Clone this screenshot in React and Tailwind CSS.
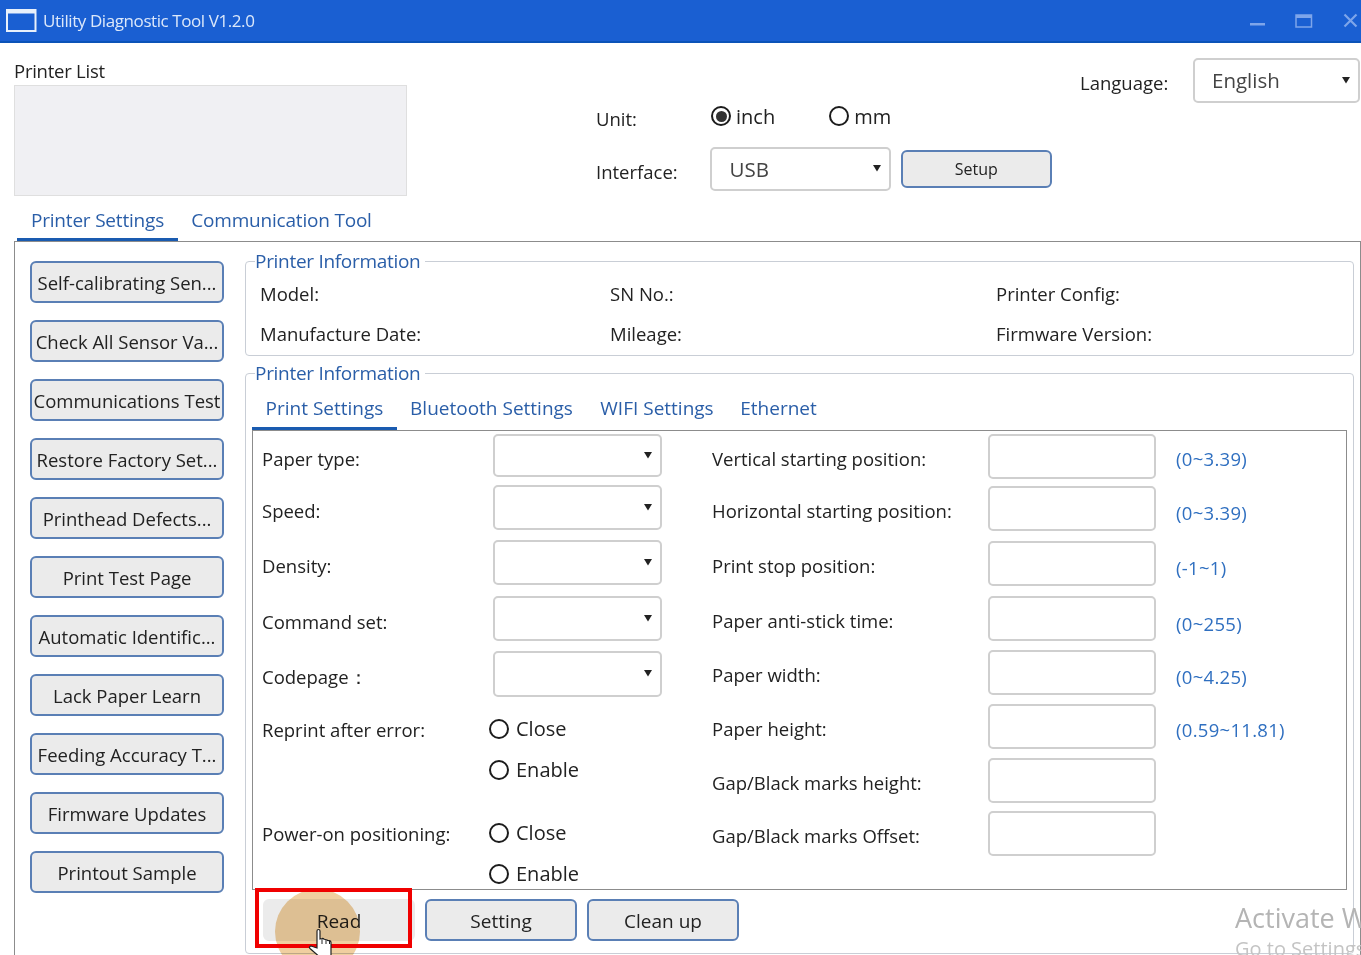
import React from 'react';

const sideButtons = [
  'Self-calibrating Sen...',
  'Check All Sensor Va...',
  'Communications Test',
  'Restore Factory Set...',
  'Printhead Defects...',
  'Print Test Page',
  'Automatic Identific...',
  'Lack Paper Learn',
  'Feeding Accuracy T...',
  'Firmware Updates',
  'Printout Sample',
];

const rightRows = [
  { label: 'Vertical starting position:', hint: '(0~3.39)', cls: 'mt-[3px]', hintCls: 'pt-[5px]' },
  { label: 'Horizontal starting position:', hint: '(0~3.39)', cls: 'mt-[7px]', hintCls: 'pt-[9px]' },
  { label: 'Print stop position:', hint: '(-1~1)', cls: 'mt-[10px]', hintCls: 'pt-[9px]' },
  { label: 'Paper anti-stick time:', hint: '(0~255)', cls: 'mt-[10px]', hintCls: 'pt-[11px]' },
  { label: 'Paper width:', hint: '(0~4.25)', cls: 'mt-[9px]', hintCls: 'pt-[9px]' },
  { label: 'Paper height:', hint: '(0.59~11.81)', cls: 'mt-[9px]', hintCls: 'pt-[7px]' },
  { label: 'Gap/Black marks height:', cls: 'mt-[9px]' },
  { label: 'Gap/Black marks Offset:', cls: 'mt-[8px]' },
];

const selectRows = [
  { label: 'Paper type:', cls: 'mt-[3px] h-[43px]' },
  { label: 'Speed:', cls: 'mt-[8px] h-[45px]' },
  { label: 'Density:', cls: 'mt-[10px] h-[45px]' },
  { label: 'Command set:', cls: 'mt-[11px] h-[45px]' },
  { label: 'Codepage：', cls: 'mt-[10px] h-[46px]' },
];

const Radio = ({ checked, className = '' }) => (
  <span className={`flex h-[20px] w-[20px] shrink-0 items-center justify-center rounded-full border-[2.5px] border-[#1c1c1c] ${className}`}>
    {checked && <span className="h-[11px] w-[11px] rounded-full bg-[#333]" />}
  </span>
);

const Select = ({ value, className = '' }) => (
  <div className={`relative flex items-center rounded-[5px] border-2 border-[#cfcfcf] bg-white pl-[17px] text-[20.5px] text-[#444] ${className}`}>
    {value}
    <svg className="absolute right-[8px] top-1/2 -mt-[5px]" width="8" height="8" viewBox="0 0 8 8">
      <path d="M0 1h8L4 7.5z" fill="#222" />
    </svg>
  </div>
);

const Button = ({ children, className = '' }) => (
  <button type="button" className={`flex items-center justify-center whitespace-nowrap rounded-[6px] border-2 border-[#5a7fb5] bg-[#ebebeb] text-[#222] ${className}`}>
    {children}
  </button>
);

const TabRow = ({ tabs, className = '' }) => (
  <div className={`flex ${className}`}>
    {tabs.map((t, i) => (
      <div
        key={t.label}
        className={`flex items-center justify-center border-b-[3px] ${t.w} ${i === 0 ? 'border-[#1a5bb0]' : 'border-transparent'}`}
      >
        {t.label}
      </div>
    ))}
  </div>
);

const App = () => {
  return (
    <div className="relative h-[955px] w-[1361px] overflow-hidden bg-white text-[18.5px] text-[#222] [font-family:'Open_Sans','Noto_Sans',sans-serif]">
      {/* title bar */}
      <div className="flex h-[43px] items-center border-b-2 border-[#0b53b8] bg-[#1a5fd2] text-white">
        <svg className="ml-[6px]" width="31" height="24" viewBox="0 0 31 24">
          <rect x="1" y="1" width="28.5" height="21" fill="none" stroke="#e8f0fb" strokeWidth="2" />
          <rect x="1" y="1" width="28.5" height="3.5" fill="#e8f0fb" />
        </svg>
        <span className="ml-[6px] text-[17px] tracking-[-0.42px] text-[#dce8fa]">Utility Diagnostic Tool V1.2.0</span>
        <div className="ml-auto flex items-center text-[#7ea5ea]">
          <svg width="16" height="16" viewBox="0 0 16 16"><rect x="0" y="10" width="15" height="2.5" fill="currentColor" /></svg>
          <svg className="ml-[29px]" width="18" height="16" viewBox="0 0 18 16">
            <rect x="1" y="2" width="15.5" height="12" fill="none" stroke="currentColor" strokeWidth="1.5" />
            <rect x="1" y="2" width="15.5" height="3" fill="currentColor" />
          </svg>
          <svg className="ml-[30px] mr-[2px]" width="16" height="16" viewBox="0 0 16 16">
            <path d="M1.5 1.5l12 12M13.5 1.5l-12 12" stroke="currentColor" strokeWidth="2.2" />
          </svg>
        </div>
      </div>

      {/* top area */}
      <div className="flex h-[165px]">
        <div className="ml-[14px] w-[393px]">
          <div className="mt-[15px] leading-[26px] tracking-[-0.25px]">Printer List</div>
          <div className="mt-[1px] h-[111px] border border-[#dfdfdf] bg-[#f0f0f3]" />
        </div>
        <div className="ml-[189px] w-[456px]">
          <div className="mt-[55px] flex h-[36px] items-center">
            <span className="w-[115px] pt-[5px]">Unit:</span>
            <Radio checked />
            <span className="ml-[5px] pt-[1px] text-[20px]">inch</span>
            <Radio className="ml-[54px]" />
            <span className="ml-[5px] pt-[1px] text-[20px]">mm</span>
          </div>
          <div className="mt-[13px] flex h-[44px] items-center">
            <span className="w-[115px] pt-[5px]">Interface:</span>
            <Select value="USB" className="h-[44px] w-[181px]" />
            <Button className="ml-[10px] h-[38px] w-[152px] text-[16px]">Setup</Button>
          </div>
        </div>
        <div className="mt-[15px] flex h-[45px] items-center">
          <span className="ml-[28px] w-[113px] pt-[4px]">Language:</span>
          <Select value="English" className="h-[45px] w-[167px]" />
        </div>
      </div>

      {/* main tabs */}
      <TabRow
        className="ml-[17px] h-[33px] pb-0 text-[19px] tracking-[-0.2px] text-[#2a5ea8] [&>div]:pb-[6px]"
        tabs={[
          { label: 'Printer Settings', w: 'w-[161px]' },
          { label: 'Communication Tool', w: 'w-[207px]' },
        ]}
      />

      {/* main panel */}
      <div className="ml-[14px] flex h-[720px] border border-b-0 border-[#8c8c8c]">
        <div className="ml-[15px] flex w-[194px] shrink-0 flex-col gap-[17px] pt-[19px]">
          {sideButtons.map((b) => (
            <Button key={b} className="h-[42px] pt-[2px] text-[18.5px]">{b}</Button>
          ))}
        </div>

        <div className="ml-[21px] w-[1109px]">
          <fieldset className="mt-[6px] h-[108px] rounded-[4px] border border-[#c9ced6] px-[10px]">
            <legend className="-ml-[1px] pr-[5px] text-[19px] leading-[26px] tracking-[-0.3px] text-[#2a5ea8]">Printer Information</legend>
            <div className="grid grid-cols-[350px_386px_1fr] pl-[4px] pt-[6px]">
              <div>Model:</div>
              <div>SN No.:</div>
              <div>Printer Config:</div>
              <div className="mt-[12px]">Manufacture Date:</div>
              <div className="mt-[12px]">Mileage:</div>
              <div className="mt-[12px]">Firmware Version:</div>
            </div>
          </fieldset>

          <fieldset className="mt-[4px] h-[594px] rounded-[4px] border border-[#c9ced6] px-[6px]">
            <legend className="ml-[3px] pr-[5px] text-[19px] leading-[26px] tracking-[-0.3px] text-[#2a5ea8]">Printer Information</legend>
            <TabRow
              className="h-[44px] pt-[4px] text-[19px] text-[#2a5ea8]"
              tabs={[
                { label: 'Print Settings', w: 'w-[145px]' },
                { label: 'Bluetooth Settings', w: 'w-[189px]' },
                { label: 'WIFI Settings', w: 'w-[142px]' },
                { label: 'Ethernet', w: 'w-[101px]' },
              ]}
            />
            <div className="flex h-[460px] border border-[#8c8c8c]">
              {/* left form column */}
              <div className="w-[459px] shrink-0 pl-[9px]">
                {selectRows.map((r) => (
                  <div key={r.label} className={`flex items-center ${r.cls}`}>
                    <span className="w-[231px] pt-[6px]">{r.label}</span>
                    <Select className="h-full w-[169px]" />
                  </div>
                ))}
                <div className="mt-[19px] flex">
                  <span className="w-[227px]">Reprint after error:</span>
                  <div className="flex flex-col gap-[15px]">
                    <div className="flex h-[26px] items-center"><Radio /><span className="ml-[7px] text-[20px]">Close</span></div>
                    <div className="flex h-[26px] items-center"><Radio /><span className="ml-[7px] text-[20px]">Enable</span></div>
                  </div>
                </div>
                <div className="mt-[37px] flex">
                  <span className="w-[227px]">Power-on positioning:</span>
                  <div className="flex flex-col gap-[15px]">
                    <div className="flex h-[26px] items-center"><Radio /><span className="ml-[7px] text-[20px]">Close</span></div>
                    <div className="flex h-[26px] items-center"><Radio /><span className="ml-[7px] text-[20px]">Enable</span></div>
                  </div>
                </div>
              </div>

              {/* right form column */}
              <div className="flex-1">
                {rightRows.map((r) => (
                  <div key={r.label} className={`flex h-[45px] items-center ${r.cls}`}>
                    <span className="w-[276px] pt-[5px]">{r.label}</span>
                    <div className="h-full w-[168px] rounded-[5px] border-2 border-[#cfcfcf] bg-white" />
                    {r.hint && <span className={`ml-[20px] tracking-[0.3px] text-[#2f6fc0] ${r.hintCls}`}>{r.hint}</span>}
                  </div>
                ))}
              </div>
            </div>
            <div className="ml-[11px] mt-[9px] flex gap-[10px] text-[19px]">
              <Button className="h-[42px] w-[152px] border-[#ebebeb] pt-[2px]">Read</Button>
              <Button className="h-[42px] w-[152px] pt-[2px]">Setting</Button>
              <Button className="h-[42px] w-[152px] pt-[2px]">Clean up</Button>
            </div>
          </fieldset>
        </div>
      </div>

      {/* recording overlays */}
      <div className="absolute left-[275px] top-[889px] h-[85px] w-[85px] rounded-full bg-[#f0cfa0] mix-blend-multiply" />
      <div className="absolute left-[255px] top-[888px] h-[60px] w-[157px] border-4 border-[#f00000]" />
      <svg className="absolute left-[308px] top-[928px]" width="30" height="27" viewBox="0 0 30 27">
        <path d="M9 3c0-2 3-2 3 0v8l2-.5c1-.3 2 .3 2 .8l2 .2c1 0 1.500.5 1.500 1l2 .2c1 .2 1.500.8 1.500 1.800v13H10l-8-7c-1-1-.5-2.500 1-2.500l6 2z" fill="#fff" stroke="#222" strokeWidth="1.2" />
        <path d="M14 11v5M18 12v4M21.500 13v3" stroke="#222" strokeWidth="1" fill="none" />
      </svg>
      <div className="absolute left-[1235px] top-[898px] whitespace-nowrap text-[27px] text-[#b4b4b4]">Activate Windows</div>
      <div className="absolute left-[1235px] top-[934px] whitespace-nowrap text-[20px] text-[#c4c4c4]">Go to Settings</div>
    </div>
  );
};

export default App;
